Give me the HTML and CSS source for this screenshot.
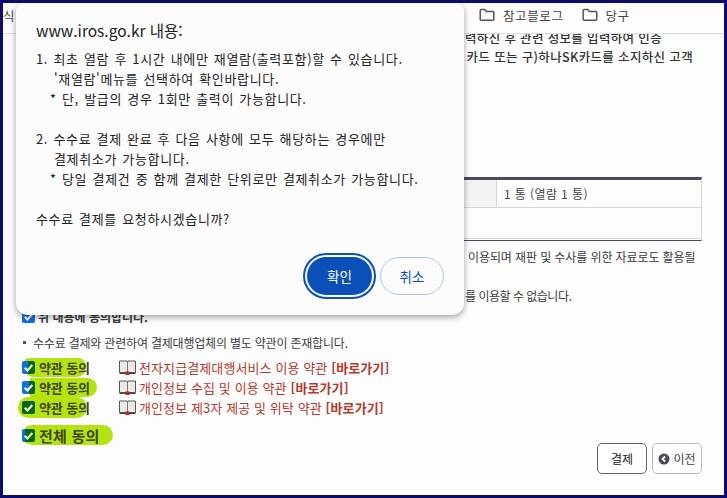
FILE: index.html
```html
<!DOCTYPE html>
<html lang="ko">
<head>
<meta charset="utf-8">
<title>수수료 결제</title>
<link rel="stylesheet" href="styles.css">
</head>
<body>
<div class="frame">
  <header class="toolbar">
    <span class="toolbar-cut">식</span>
    <span class="bookmark">
      <svg class="folder" viewBox="0 0 16 14" width="16" height="14"><path d="M1.2 2.6c0-.6.4-1 1-1h3.6l1.6 1.8h6.4c.6 0 1 .4 1 1v6.8c0 .6-.4 1-1 1H2.2c-.6 0-1-.4-1-1z" fill="none" stroke="#555" stroke-width="1.5"/></svg>
      참고블로그
    </span>
    <span class="bookmark">
      <svg class="folder" viewBox="0 0 16 14" width="16" height="14"><path d="M1.2 2.6c0-.6.4-1 1-1h3.6l1.6 1.8h6.4c.6 0 1 .4 1 1v6.8c0 .6-.4 1-1 1H2.2c-.6 0-1-.4-1-1z" fill="none" stroke="#555" stroke-width="1.5"/></svg>
      당구
    </span>
  </header>

  <main class="content">
    <p class="notice notice-a">력하신 후 관련 정보를 입력하여 인증</p>
    <p class="notice notice-b">카드 또는 구)하나SK카드를 소지하신 고객</p>

    <div class="fee-table">
      <div class="fee-row">
        <div class="fee-label"></div>
        <div class="fee-value">1 통 (열람 1 통)</div>
      </div>
      <div class="fee-row fee-empty"></div>
    </div>

    <p class="plain plain-a">이용되며 재판 및 수사를 위한 자료로도 활용될</p>
    <p class="plain plain-b">를 이용할 수 없습니다.</p>

    <div class="agree-top">
      <span class="check check-blue"><svg viewBox="0 0 12 12"><path d="M2.5 6.2l2.5 2.5 4.5-5" fill="none" stroke="#fff" stroke-width="2"/></svg></span>
      <span>위 내용에 동의합니다.</span>
    </div>

    <p class="bullet"><i class="square"></i>수수료 결제와 관련하여 결제대행업체의 별도 약관이 존재합니다.</p>

    <div class="terms">
      <div class="term term-1">
        <span class="mark mark-1"><span class="check check-half"><svg viewBox="0 0 12 12"><path d="M2.5 6.2l2.5 2.5 4.5-5" fill="none" stroke="#e9ffb0" stroke-width="2"/></svg></span><span class="agree">약관 동의</span></span>
        <svg class="book" viewBox="0 0 17 15" width="17" height="15"><path d="M.5 1h7.6l.4.7.4-.7h7.6v11.500H.5z" fill="#eceae6" stroke="#555"/><path d="M8.500 1.700v10.800" stroke="#777"/><path d="M.5 12.800h16v1.200H.5z" fill="#444"/><path d="M6.500 11.500h4v3.500h-4z" fill="#b32a12"/></svg>
        <a class="link">전자지급결제대행서비스 이용 약관 <b>[바로가기]</b></a>
      </div>
      <div class="term term-2">
        <span class="mark mark-2"><span class="check check-half2"><svg viewBox="0 0 12 12"><path d="M2.5 6.2l2.5 2.5 4.5-5" fill="none" stroke="#fff" stroke-width="2"/></svg></span><span class="agree">약관 동의</span></span>
        <svg class="book" viewBox="0 0 17 15" width="17" height="15"><path d="M.5 1h7.6l.4.7.4-.7h7.6v11.500H.5z" fill="#eceae6" stroke="#555"/><path d="M8.500 1.700v10.800" stroke="#777"/><path d="M.5 12.800h16v1.200H.5z" fill="#444"/><path d="M6.500 11.500h4v3.500h-4z" fill="#b32a12"/></svg>
        <a class="link">개인정보 수집 및 이용 약관 <b>[바로가기]</b></a>
      </div>
      <div class="term term-3">
        <span class="mark mark-3"><span class="check check-green"><svg viewBox="0 0 12 12"><path d="M2.5 6.2l2.5 2.5 4.5-5" fill="none" stroke="#e9ffb0" stroke-width="2"/></svg></span><span class="agree">약관 동의</span></span>
        <svg class="book" viewBox="0 0 17 15" width="17" height="15"><path d="M.5 1h7.6l.4.7.4-.7h7.6v11.500H.5z" fill="#eceae6" stroke="#555"/><path d="M8.500 1.700v10.800" stroke="#777"/><path d="M.5 12.800h16v1.200H.5z" fill="#444"/><path d="M6.500 11.500h4v3.500h-4z" fill="#b32a12"/></svg>
        <a class="link">개인정보 제3자 제공 및 위탁 약관 <b>[바로가기]</b></a>
      </div>
      <div class="term term-all">
        <span class="mark mark-4"><span class="check check-edge"><svg viewBox="0 0 12 12"><path d="M2.5 6.2l2.5 2.5 4.5-5" fill="none" stroke="#e9ffb0" stroke-width="2"/></svg></span><span class="agree agree-all">전체 동의</span></span>
      </div>
    </div>

    <div class="actions">
      <button class="btn btn-pay">결제</button>
      <button class="btn btn-back"><svg viewBox="0 0 12 12" width="12" height="12"><circle cx="6" cy="6" r="5.500" fill="#4a4a5a"/><path d="M7 3.500L4.500 6 7 8.500" fill="none" stroke="#fff" stroke-width="1.800"/></svg>이전</button>
    </div>
  </main>

  <section class="dialog">
    <h1 class="dialog-title">www.iros.go.kr 내용:</h1>
    <div class="dialog-body">
      <p>1. 최초 열람 후 1시간 내에만 재열람(출력포함)할 수 있습니다.</p>
      <p class="in-a">'재열람'메뉴를 선택하여 확인바랍니다.</p>
      <p class="in-b">* 단, 발급의 경우 1회만 출력이 가능합니다.</p>
      <p class="gap">2. 수수료 결제 완료 후 다음 사항에 모두 해당하는 경우에만</p>
      <p class="in-a">결제취소가 가능합니다.</p>
      <p class="in-b">* 당일 결제건 중 함께 결제한 단위로만 결제취소가 가능합니다.</p>
      <p class="gap">수수료 결제를 요청하시겠습니까?</p>
    </div>
    <div class="dialog-actions">
      <button class="dlg-btn dlg-ok">확인</button>
      <button class="dlg-btn dlg-cancel">취소</button>
    </div>
  </section>
</div>
</body>
</html>
```
FILE: styles.css
```css
* { box-sizing: border-box; }
html, body { margin: 0; padding: 0; }
body { width: 727px; height: 498px; overflow: hidden; font-family: "Noto Sans CJK KR", "Noto Sans", sans-serif; }
p, h1 { margin: 0; }

.frame {
  position: relative;
  width: 727px;
  height: 498px;
  border: 3px solid #0b0b6b;
  background: #fdfdfe;
  display: flex;
  flex-direction: column;
  overflow: hidden;
}

.toolbar {
  flex: none;
  height: 31px;
  border-bottom: 1px solid #dcdce0;
  display: flex;
  align-items: center;
  font-size: 12.500px;
  letter-spacing: .6px;
  color: #444;
  padding-bottom: 6px;
}
.toolbar-cut { width: 476px; }
.bookmark { display: flex; align-items: center; gap: 8px; margin-right: 18px; }
.folder { flex: none; }

.content { flex: 1; overflow: hidden; min-height: 0; font-size: 12px; color: #3c3c3c; }

.notice { font-weight: 500; font-size: 12.500px; letter-spacing: .35px; color: #333; line-height: 19px; white-space: nowrap; text-align: right; }
.notice-a { margin-top: -6px; padding-right: 62px; }
.notice-b { padding-right: 31px; }

.fee-table {
  margin: 111px 22px 0 19px;
  border-top: 3px solid #4a4a5e;
  border-right: 1px solid #d6d6de;
  border-bottom: 1px solid #4a4a5e;
  height: 64px;
}
.fee-row { display: flex; height: 28px; border-bottom: 1px solid #d6d6de; }
.fee-label { width: 475px; background: #f3f3f6; border-right: 1px solid #d6d6de; }
.fee-value { padding-left: 7px; line-height: 27px; color: #444; letter-spacing: .4px; }
.fee-empty { height: 31px; border-bottom: 1px solid #d6d6de; }

.plain { white-space: nowrap; line-height: 18px; }
.plain-a { margin-top: 7px; padding-left: 465px; letter-spacing: -.1px; }
.plain-b { margin-top: 21px; padding-left: 462px; letter-spacing: -.5px; }

.agree-top { display: flex; align-items: center; gap: 3px; margin: 2px 0 0 19px; height: 18px; font-weight: 700; }

.check { flex: none; width: 13px; height: 13px; border-radius: 2px; display: block; }
.check svg { display: block; width: 13px; height: 13px; }
.check-blue { background: #0b6ff0; }
.check-green { background: #0a651c; }
.check-half { background: linear-gradient(90deg, #0b6ff0 6px, #0a651c 6px); }
.check-half2 { background: linear-gradient(90deg, #0b6ff0 7px, #0a651c 7px); }
.check-edge { background: linear-gradient(90deg, #0b6ff0 3px, #0a651c 3px); }

.bullet { display: flex; align-items: center; margin: 8px 0 0 19px; height: 18px; letter-spacing: -.2px; }
.square { width: 3px; height: 3px; background: #555; margin: 0 7px 0 1px; }

.terms { margin: 6px 0 0 19px; }
.term { display: flex; align-items: center; height: 20px; }
.term-3 { height: 21px; }
.term-all { height: 22px; margin-top: 6px; }

.mark { position: relative; display: flex; align-items: center; gap: 4px; height: 19px; }
.mark-1 { width: 64px; border-radius: 9px 10px 12px 16px; background: linear-gradient(90deg, transparent 3px, #b5e312 3px); }
.mark-2 { width: 75px; border-radius: 10px; background: linear-gradient(90deg, transparent 8px, #b5e312 8px); }
.mark-3 { width: 69px; margin-left: -4px; padding-left: 4px; border-radius: 10px; height: 21px; background: #b5e312; }
.mark-4 { width: 91px; border-radius: 10px; height: 20px; background: linear-gradient(90deg, transparent 3px, #b5e312 3px); }

.agree { font-weight: 700; font-size: 13px; color: #3f4410; white-space: nowrap; letter-spacing: -.1px; }
.agree-all { font-size: 15px; letter-spacing: .2px; }

.book { flex: none; }
.term-1 .book { margin-left: 33px; }
.term-2 .book { margin-left: 22px; }
.term-3 .book { margin-left: 32px; }
.link { margin-left: 3px; font-size: 13px; color: #b23a2c; white-space: nowrap; letter-spacing: .1px; }
.link b { font-weight: 700; }

.actions { display: flex; justify-content: flex-end; gap: 5px; margin: -3px 22px 0 0; }
.btn { width: 50px; height: 31px; background: #fff; border-radius: 5px; font: inherit; color: #222; padding: 0; display: flex; align-items: center; justify-content: center; gap: 3px; }
.btn-pay { border: 1px solid #666; }
.btn-back { border: 1px solid #bbb; color: #444; }

.dialog {
  position: absolute;
  left: 13px;
  top: 0;
  width: 448px;
  height: 312px;
  background: #fcfcfd;
  border-radius: 8px 8px 12px 12px;
  box-shadow: 0 2px 6px rgba(0,0,0,.38);
  padding: 16px 20px 20px;
  display: flex;
  flex-direction: column;
  color: #222;
}
.dialog-title { font-size: 15.500px; font-weight: 400; line-height: 22px; color: #222; }
.dialog-body { margin-top: 8px; font-size: 13px; letter-spacing: .65px; line-height: 20px; white-space: nowrap; flex: 1; word-spacing: 1px; }
.dialog-body .gap { margin-top: 20px; }
.in-a { padding-left: 18px; }
.in-b { padding-left: 14px; }

.dialog-actions { display: flex; justify-content: flex-end; align-items: center; gap: 8px; }
.dlg-btn { font-family: inherit; font-size: 13.500px; padding: 0; height: 38px; border-radius: 19px; }
.dlg-ok { width: 65px; background: #0b4fb8; color: #fff; border: none; outline: 2px solid #0b4fb8; outline-offset: 2px; }
.dlg-cancel { width: 64px; background: #fcfcfd; color: #0b4fb8; border: 1px solid #a9c6f2; }
```
